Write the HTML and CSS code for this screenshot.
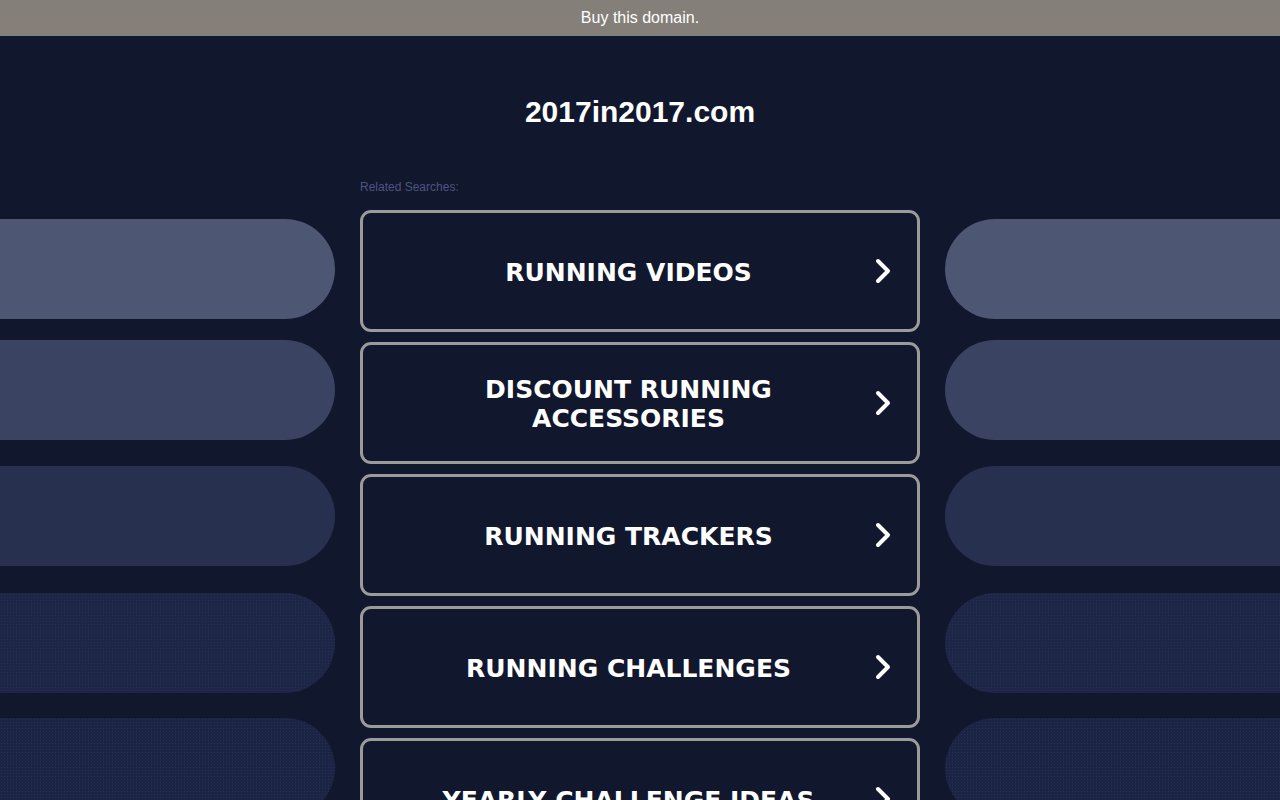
FILE: index.html
```html
<!DOCTYPE html>
<html lang="en">
<head>
<meta charset="utf-8">
<title>2017in2017.com</title>
<link rel="stylesheet" href="styles.css">
</head>
<body>
<div class="topbar">Buy this domain.</div>
<h1 class="domain">2017in2017.com</h1>
<div class="layout">
  <div class="side side-left">
    <div class="pill p1"></div>
    <div class="pill p2"></div>
    <div class="pill p3"></div>
    <div class="pill p4"></div>
    <div class="pill p5"></div>
  </div>
  <div class="center">
    <div class="related">Related Searches:</div>
    <div class="list">
      <a class="item" href="#"><span class="label">RUNNING VIDEOS</span><svg class="chev" viewBox="0 0 18 28" width="18" height="28"><path d="M4 4 L14 14 L4 24"/></svg></a>
      <a class="item" href="#"><span class="label">DISCOUNT RUNNING ACCESSORIES</span><svg class="chev" viewBox="0 0 18 28" width="18" height="28"><path d="M4 4 L14 14 L4 24"/></svg></a>
      <a class="item" href="#"><span class="label">RUNNING TRACKERS</span><svg class="chev" viewBox="0 0 18 28" width="18" height="28"><path d="M4 4 L14 14 L4 24"/></svg></a>
      <a class="item" href="#"><span class="label">RUNNING CHALLENGES</span><svg class="chev" viewBox="0 0 18 28" width="18" height="28"><path d="M4 4 L14 14 L4 24"/></svg></a>
      <a class="item" href="#"><span class="label">YEARLY CHALLENGE IDEAS</span><svg class="chev" viewBox="0 0 18 28" width="18" height="28"><path d="M4 4 L14 14 L4 24"/></svg></a>
    </div>
  </div>
  <div class="side side-right">
    <div class="pill p1"></div>
    <div class="pill p2"></div>
    <div class="pill p3"></div>
    <div class="pill p4"></div>
    <div class="pill p5"></div>
  </div>
</div>
</body>
</html>
```
FILE: styles.css
```css
html, body {
  margin: 0;
  padding: 0;
  height: 100%;
  overflow: hidden;
}
body {
  background: #11172c;
  font-family: "Liberation Sans", Arial, sans-serif;
  color: #fff;
}
.topbar {
  height: 36px;
  line-height: 35px;
  background: #857f7a;
  color: #fff;
  font-size: 16px;
  text-align: center;
}
.domain {
  margin: 58px 0 0;
  font-size: 30px;
  line-height: 36px;
  font-weight: bold;
  text-align: center;
  color: #fff;
}
.layout {
  display: grid;
  grid-template-columns: 1fr 560px 1fr;
  column-gap: 25px;
  margin-top: 50px;
}
.side {
  display: flex;
  flex-direction: column;
  gap: 25px;
  padding-top: 39px;
}
.pill {
  height: 100px;
  flex: none;
}
.side-left .pill {
  border-radius: 0 50px 50px 0;
}
.side-right .pill {
  border-radius: 50px 0 0 50px;
}
.side .p2 { margin-top: -4px; }
.side .p3 { margin-top: 1px; }
.side .p4 { margin-top: 2px; }
.p1 { background: #4d5773; }
.p2 { background: #3a4361; }
.p3 { background: #27304f; }
.p4 {
  background-color: #1d2646;
  background-image: radial-gradient(circle, rgba(60,72,110,0.3) 0.6px, transparent 1px);
  background-size: 3px 3px;
}
.p5 {
  background-color: #1b2444;
  background-image: radial-gradient(circle, rgba(60,72,110,0.35) 0.6px, transparent 1px);
  background-size: 3px 3px;
}
.related {
  font-size: 12px;
  line-height: 14px;
  color: #4b5580;
  margin-bottom: 16px;
}
.list {
  display: flex;
  flex-direction: column;
  gap: 10px;
}
.item {
  display: flex;
  align-items: center;
  height: 122px;
  box-sizing: border-box;
  border: 3px solid #9b9b9b;
  border-radius: 11px;
  text-decoration: none;
  color: #fff;
}
.label {
  flex: 1;
  padding: 2px 44px 0 64px;
  text-align: center;
  font-family: "DejaVu Sans", Verdana, sans-serif;
  font-weight: bold;
  font-size: 25px;
  line-height: 29px;
}
.chev {
  flex: none;
  margin-right: 25px;
}
.chev path {
  fill: none;
  stroke: #fff;
  stroke-width: 4;
  stroke-linecap: round;
  stroke-linejoin: round;
}
```
